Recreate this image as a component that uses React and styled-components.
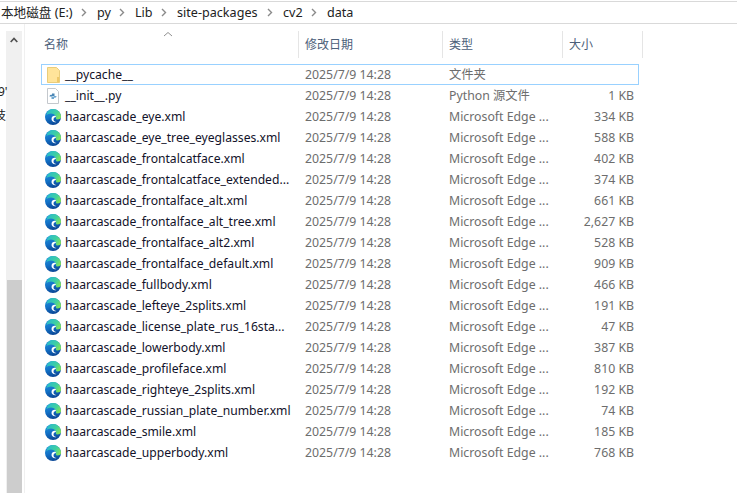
import React from 'react';
import styled, { createGlobalStyle } from 'styled-components';

const GlobalStyle = createGlobalStyle`
  html, body {
    margin: 0;
    padding: 0;
    background: #fff;
    overflow: hidden;
  }
`;

const Window = styled.div`
  width: 737px;
  height: 493px;
  display: flex;
  flex-direction: column;
  overflow: hidden;
  font-family: "Noto Sans", "Noto Sans CJK SC", sans-serif;
  font-size: 12px;
  color: #1a1a1a;
`;

const AddressBar = styled.div`
  height: 21px;
  flex: none;
  margin-top: 1px;
  border-top: 1px solid #d9d9d9;
  border-bottom: 1px solid #d9d9d9;
  display: flex;
  align-items: center;
  padding-left: 1px;
`;

const Crumb = styled.span`
  font-size: 12.6px;
  line-height: 21px;
  color: #222;
  white-space: nowrap;
  width: ${(p) => p.$w}px;
  flex: none;
`;

const Main = styled.div`
  flex: 1;
  display: flex;
  min-height: 0;
`;

const LeftPane = styled.div`
  width: 25px;
  flex: none;
  border-right: 1px solid #f0f0f0;
  position: relative;
  display: flex;
  justify-content: flex-end;
  padding-right: 2px;
  box-sizing: border-box;
  overflow: hidden;
`;

const ClippedGlyph = styled.span`
  position: absolute;
  left: ${(p) => p.$left}px;
  top: ${(p) => p.$top}px;
  font-size: 12px;
  line-height: 14px;
  color: #222;
`;

const ScrollTrack = styled.div`
  width: 16px;
  margin-top: 7px;
  background: #f0f0f0;
  display: flex;
  flex-direction: column;
  align-items: center;
`;

const ScrollUp = styled.div`
  height: 17px;
  display: flex;
  align-items: center;
  justify-content: center;
`;

const ScrollGap = styled.div`
  height: 232px;
  flex: none;
`;

const ScrollThumb = styled.div`
  flex: 1;
  width: 15px;
  background: #cdcdcd;
`;

const Content = styled.div`
  flex: 1;
  padding-left: 16px;
  display: flex;
  flex-direction: column;
  position: relative;
`;

const SortMark = styled.svg`
  position: absolute;
  left: 138px;
  top: 7px;
`;

const Header = styled.div`
  height: 27px;
  margin-top: 7px;
  display: grid;
  grid-template-columns: 258px 144px 120px 80px;
  flex: none;
`;

const HeaderCell = styled.div`
  border-right: 1px solid #e5e5e5;
  padding-left: ${(p) => p.$pad}px;
  line-height: 27px;
  font-size: 12px;
  color: #4c607a;
  white-space: nowrap;
`;

const Rows = styled.div`
  margin-top: 6px;
  width: 598px;
`;

const Row = styled.div`
  height: 21px;
  display: grid;
  grid-template-columns: 257px 144px 120px 75px;
  align-items: center;
  box-sizing: border-box;
  border: 1px solid ${(p) => (p.$selected ? '#99d1ff' : 'transparent')};
`;

const NameCell = styled.div`
  display: flex;
  align-items: center;
  gap: 4px;
  padding-left: 3px;
  font-size: 12.15px;
  color: #12122a;
  white-space: nowrap;
  line-height: 19px;
`;

const IconSlot = styled.div`
  width: 16px;
  height: 16px;
  flex: none;
  display: flex;
  align-items: center;
  justify-content: center;
`;

const MetaCell = styled.div`
  font-size: 12.3px;
  color: #6d6d6d;
  white-space: nowrap;
  line-height: 19px;
  text-align: ${(p) => (p.$right ? 'right' : 'left')};
  padding-left: ${(p) => (p.$right ? 0 : 6)}px;
  padding-right: ${(p) => (p.$right ? 4 : 0)}px;
`;

const CrumbGap = styled.span`
  display: inline-flex;
  width: ${(p) => p.$w}px;
  flex: none;
`;

const Chevron = () => (
  <svg width="6" height="9" viewBox="0 0 6 9" style={{ flex: 'none' }}>
    <path d="M1 1l3.500 3.500L1 8" fill="none" stroke="#8a8a8a" strokeWidth="1.400" />
  </svg>
);

const FolderIcon = () => (
  <svg width="13" height="16" viewBox="0 0 13 16">
    <path d="M.5.500h9l3 3v12H.5z" fill="#ffe49a" stroke="#e9cd7c" />
    <rect x="10" y="10" width="2" height="5" fill="#eec869" />
  </svg>
);

const PythonFileIcon = () => (
  <svg width="16" height="16" viewBox="0 0 16 16">
    <path d="M2.500.500h8l3 3v12h-11z" fill="#fff" stroke="#c4c8cd" />
    <path d="M4.500 8.500c0-1.500 1-1.800 2.500-1.800V5.500h2.500v2.500H7v.500z" fill="#4a86b5" />
    <path d="M11.500 8c0 1.500-1 1.800-2.500 1.800V11H6.500V8.500H9V8z" fill="#6ea6cf" />
  </svg>
);

const EdgeIcon = ({ id }) => (
  <svg width="16" height="16" viewBox="0 0 16 16">
    <defs>
      <linearGradient id={`${id}a`} x1="0.2" y1="0" x2="0.5" y2="1">
        <stop offset="0" stopColor="#2496d8" />
        <stop offset="0.5" stopColor="#1272c8" />
        <stop offset="1" stopColor="#0b4796" />
      </linearGradient>
      <linearGradient id={`${id}b`} x1="0" y1="0.2" x2="1" y2="0.7">
        <stop offset="0" stopColor="#28b8d0" />
        <stop offset="0.6" stopColor="#3fd0a0" />
        <stop offset="1" stopColor="#86e452" />
      </linearGradient>
    </defs>
    <circle cx="8" cy="8" r="8" fill={`url(#${id}a)`} />
    <path d="M8 0a8 8 0 0 1 8 8c0 2-2.500 2.800-5 2.300.700-3-1.500-5.800-5-5.800-2 0-3.500 1-4.500 1.500C2 2.500 4.500 0 8 0z" fill={`url(#${id}b)`} />
    <path d="M6.500 10C6.500 8 8 6.800 9.500 6.800c.9 0 1.400.4 1.500 1.200-1.500 0-2.500 1.200-2.500 2.600 0 1.300 1.200 2.300 3 2.400-2.600 1-5-1-5-3z" fill="#fff" />
  </svg>
);

const edge = 'Microsoft Edge ...';

const files = [
  { name: 'haarcascade_eye.xml', size: '334 KB' },
  { name: 'haarcascade_eye_tree_eyeglasses.xml', size: '588 KB' },
  { name: 'haarcascade_frontalcatface.xml', size: '402 KB' },
  { name: 'haarcascade_frontalcatface_extended...', size: '374 KB' },
  { name: 'haarcascade_frontalface_alt.xml', size: '661 KB' },
  { name: 'haarcascade_frontalface_alt_tree.xml', size: '2,627 KB' },
  { name: 'haarcascade_frontalface_alt2.xml', size: '528 KB' },
  { name: 'haarcascade_frontalface_default.xml', size: '909 KB' },
  { name: 'haarcascade_fullbody.xml', size: '466 KB' },
  { name: 'haarcascade_lefteye_2splits.xml', size: '191 KB' },
  { name: 'haarcascade_license_plate_rus_16sta...', size: '47 KB' },
  { name: 'haarcascade_lowerbody.xml', size: '387 KB' },
  { name: 'haarcascade_profileface.xml', size: '810 KB' },
  { name: 'haarcascade_righteye_2splits.xml', size: '192 KB' },
  { name: 'haarcascade_russian_plate_number.xml', size: '74 KB' },
  { name: 'haarcascade_smile.xml', size: '185 KB' },
  { name: 'haarcascade_upperbody.xml', size: '768 KB' },
];

const stamp = '2025/7/9 14:28';

const App = () => (
  <Window>
    <GlobalStyle />
    <AddressBar>
      <Crumb $w={80}>本地磁盘 (E:)</Crumb>
      <Chevron />
      <CrumbGap $w={10} />
      <Crumb $w={22}>py</Crumb>
      <Chevron />
      <CrumbGap $w={10} />
      <Crumb $w={26}>Lib</Crumb>
      <Chevron />
      <CrumbGap $w={10} />
      <Crumb $w={90}>site-packages</Crumb>
      <Chevron />
      <CrumbGap $w={10} />
      <Crumb $w={28}>cv2</Crumb>
      <Chevron />
      <CrumbGap $w={10} />
      <Crumb $w={30}>data</Crumb>
    </AddressBar>
    <Main>
      <LeftPane>
        <ClippedGlyph $top={61} $left={-2}>9'</ClippedGlyph>
        <ClippedGlyph $top={85} $left={-6}>技</ClippedGlyph>
        <ScrollTrack>
          <ScrollUp>
            <svg width="8" height="6" viewBox="0 0 8 6">
              <path d="M.7 5L4 1.500 7.300 5" fill="none" stroke="#505050" strokeWidth="1.700" />
            </svg>
          </ScrollUp>
          <ScrollGap />
          <ScrollThumb />
        </ScrollTrack>
      </LeftPane>
      <Content>
        <SortMark width="10" height="6" viewBox="0 0 10 6">
          <path d="M1 5l4-3.500L9 5" fill="none" stroke="#8f8f8f" />
        </SortMark>
        <Header>
          <HeaderCell $pad={3}>名称</HeaderCell>
          <HeaderCell $pad={6}>修改日期</HeaderCell>
          <HeaderCell $pad={6}>类型</HeaderCell>
          <HeaderCell $pad={6}>大小</HeaderCell>
        </Header>
        <Rows>
          <Row $selected>
            <NameCell>
              <IconSlot><FolderIcon /></IconSlot>
              __pycache__
            </NameCell>
            <MetaCell>{stamp}</MetaCell>
            <MetaCell>文件夹</MetaCell>
            <MetaCell $right />
          </Row>
          <Row>
            <NameCell>
              <IconSlot><PythonFileIcon /></IconSlot>
              __init__.py
            </NameCell>
            <MetaCell>{stamp}</MetaCell>
            <MetaCell>Python 源文件</MetaCell>
            <MetaCell $right>1 KB</MetaCell>
          </Row>
          {files.map((file, i) => (
            <Row key={file.name}>
              <NameCell>
                <IconSlot><EdgeIcon id={`edge${i}`} /></IconSlot>
                {file.name}
              </NameCell>
              <MetaCell>{stamp}</MetaCell>
              <MetaCell>{edge}</MetaCell>
              <MetaCell $right>{file.size}</MetaCell>
            </Row>
          ))}
        </Rows>
      </Content>
    </Main>
  </Window>
);

export default App;
